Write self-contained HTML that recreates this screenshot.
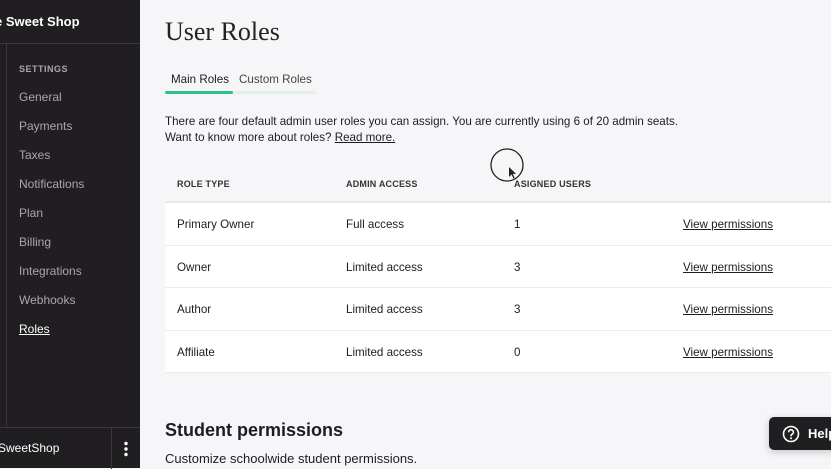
<!DOCTYPE html>
<html><head><style>
*{margin:0;padding:0;box-sizing:border-box}
body{width:831px;height:468px;overflow:hidden;background:#f6f6f8;font-family:"Liberation Sans",sans-serif;position:relative;color:#1d1d1f}
.sb{position:absolute;left:0;top:0;width:140px;height:468px;background:#201e21}
.sb .hd{position:absolute;left:0;top:0;width:140px;height:44px;border-bottom:1px solid #3a383b;color:#fff;font-weight:bold;font-size:13px;line-height:44px;padding-left:0;white-space:nowrap;text-indent:-5px}
.sb .vl{position:absolute;left:6px;top:44px;width:1px;height:383px;background:#3a383b}
.sb .it{position:absolute;left:19px;font-size:12px;color:#a9a7aa}
.sb .ft{position:absolute;left:0;top:427px;width:140px;height:41px;border-top:1px solid #3a383b;color:#fff;font-size:12px;line-height:41px;text-indent:-2px}
.sb .ft .d{position:absolute;left:111px;top:0;width:1px;height:41px;background:#3a383b}
h1{position:absolute;left:165px;top:17px;font-family:"Liberation Serif",serif;font-weight:normal;font-size:26px;color:#222}
.tabs{position:absolute;left:165px;top:72px;width:151px;height:22px;border-bottom:3px solid #e4efe9;font-size:11.6px}
.tabs span{position:absolute;top:1px}
.tabs .ul{position:absolute;left:0;top:19px;width:68px;height:3px;background:#2cc28a;border-radius:2px}
.p{position:absolute;left:165px;font-size:11.6px;color:#1d1d1f}
.tbl{position:absolute;left:165px;top:165px;width:666px}
.th{height:38px;border-bottom:2px solid #e8e8eb;position:relative;font-size:9px;font-weight:bold;letter-spacing:.2px;color:#333}
.th span{position:absolute;top:14px}
.row{height:42.5px;background:#fff;border-bottom:1px solid #ececef;position:relative;font-size:11.6px}
.row span{position:absolute;top:15px}
.c1{left:12px}.c2{left:181px}.c3{left:349px}.c4{left:518px;text-decoration:underline}
</style></head><body>
<div class="sb">
<div class="hd">e Sweet Shop</div>
<div class="vl"></div>
<div class="it" style="top:64px;font-size:9px;font-weight:bold;letter-spacing:.5px">SETTINGS</div>
<div class="it" style="top:90px">General</div>
<div class="it" style="top:119px">Payments</div>
<div class="it" style="top:148px">Taxes</div>
<div class="it" style="top:177px">Notifications</div>
<div class="it" style="top:206px">Plan</div>
<div class="it" style="top:235px">Billing</div>
<div class="it" style="top:264px">Integrations</div>
<div class="it" style="top:293px">Webhooks</div>
<div class="it" style="top:322px;color:#fff;text-decoration:underline">Roles</div>
<div class="ft">SweetShop<div class="d"></div><svg style="position:absolute;left:123px;top:13px" width="6" height="16"><circle cx="3" cy="2.5" r="1.7" fill="#fff"/><circle cx="3" cy="8" r="1.7" fill="#fff"/><circle cx="3" cy="13.5" r="1.7" fill="#fff"/></svg></div>
</div>
<h1>User Roles</h1>
<div class="tabs"><span style="left:6px">Main Roles</span><span style="left:74px;color:#444">Custom Roles</span><div class="ul"></div></div>
<div class="p" style="top:115px">There are four default admin user roles you can assign. You are currently using 6 of 20 admin seats.</div>
<div class="p" style="top:131px">Want to know more about roles? <u>Read more.</u></div>
<div class="tbl">
<div class="th"><span class="c1">ROLE TYPE</span><span class="c2">ADMIN ACCESS</span><span class="c3">ASIGNED USERS</span></div>
<div class="row"><span class="c1">Primary Owner</span><span class="c2">Full access</span><span class="c3">1</span><span class="c4">View permissions</span></div>
<div class="row"><span class="c1">Owner</span><span class="c2">Limited access</span><span class="c3">3</span><span class="c4">View permissions</span></div>
<div class="row"><span class="c1">Author</span><span class="c2">Limited access</span><span class="c3">3</span><span class="c4">View permissions</span></div>
<div class="row"><span class="c1">Affiliate</span><span class="c2">Limited access</span><span class="c3">0</span><span class="c4">View permissions</span></div>
</div>
<svg style="position:absolute;left:490px;top:148px" width="36" height="36"><circle cx="17" cy="17" r="16" fill="none" stroke="#222" stroke-width="1.3"/><path d="M19 19 l0 10 l2.5 -2.5 l2 4 l1.2 -.6 l-2 -4 l3.3 0 z" fill="#222"/></svg>
<div class="p" style="top:420px;font-size:18px;font-weight:bold">Student permissions</div>
<div class="p" style="top:451px;font-size:13px">Customize schoolwide student permissions.</div>
<div style="position:absolute;left:769px;top:417px;width:80px;height:33px;background:#201e21;border-radius:5px;box-shadow:0 2px 8px rgba(0,0,0,.2);color:#fff;font-weight:bold;font-size:13px;line-height:33px;padding-left:39px">Help
<svg style="position:absolute;left:13px;top:8px" width="18" height="18"><circle cx="9" cy="9" r="7.5" fill="none" stroke="#fff" stroke-width="1.6"/><path d="M6.6 7.2a2.4 2.4 0 1 1 3.3 2.2c-.6.3-.9.7-.9 1.4v.5" fill="none" stroke="#fff" stroke-width="1.6"/><circle cx="9" cy="13.3" r="1" fill="#fff"/></svg></div>
</body></html>
